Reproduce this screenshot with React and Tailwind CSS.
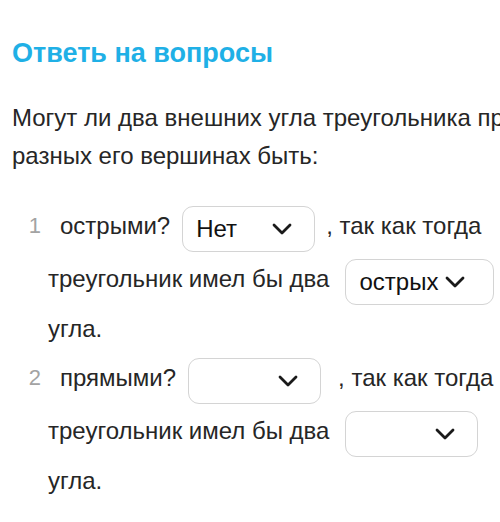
import React from "react";

const Chevron = () => (
    <svg width="20" height="12" viewBox="0 0 20 12" fill="none" className="shrink-0">
        <path d="M2 2 L10 10 L18 2" stroke="#1a1a1a" strokeWidth="2.8" strokeLinecap="round" strokeLinejoin="round" />
    </svg>
);

function Pick({ value, width, tight }) {
    return (
        <div
            className={`h-[46px] ${width} shrink-0 flex items-center ${tight ? "justify-start pr-[28px]" : "justify-between pr-[22px]"} pl-[13px] gap-[7px] border border-[#d4d4d4] rounded-[11px] bg-white text-[24px] text-[#111]`}
        >
            <span className="leading-none">{value}</span>
            <Chevron />
        </div>
    );
}

function Item({ num, word, answer, second, w1, w2, tight, gapA, gapB }) {
    return (
        <div className="flex flex-col">
            <div className="h-[53px] flex items-center">
                <span className="w-[29px] text-right text-[22px] text-[#a3a3a3] font-light mb-[6px]">{num}</span>
                <span className="ml-[19px] mb-[6px]">{word}</span>
                <div className={gapA}>
                    <Pick value={answer} width={w1} />
                </div>
                <span className={`${gapB} mb-[6px]`}>, так как тогда</span>
            </div>
            <div className="h-[53px] flex items-center pl-[36px]">
                <span className="mb-[6px]">треугольник имел бы два</span>
                <div className="ml-[16px]">
                    <Pick value={second} width={w2} tight={tight} />
                </div>
            </div>
            <div className="h-[46px] flex items-center pl-[36px]">
                <span className="mb-[4px]">угла.</span>
            </div>
        </div>
    );
}

export default function App() {
    return (
        <div
            className="w-[500px] h-[522px] overflow-hidden bg-white text-[#262626] text-[24px] whitespace-nowrap"
            style={{ fontFamily: '"Liberation Sans", Arial, sans-serif' }}
        >
            <h1 className="pt-[40px] pl-[12px] text-[27px] leading-none font-bold text-[#1fb0e6]">
                Ответь на вопросы
            </h1>
            <p className="mt-[32px] pl-[12px] leading-[38px]">
                Могут ли два внешних угла треугольника при
                <br />
                разных его вершинах быть:
            </p>
            <div className="mt-[27px] pl-[12px] flex flex-col">
                <Item
                    num="1"
                    word="острыми?"
                    answer="Нет"
                    second="острых"
                    w1="w-[133px]"
                    w2="w-auto"
                    tight
                    gapA="ml-[12px]"
                    gapB="ml-[11px]"
                />
                <Item
                    num="2"
                    word="прямыми?"
                    answer=""
                    second=""
                    w1="w-[133px]"
                    w2="w-[133px]"
                    gapA="ml-[12px]"
                    gapB="ml-[17px]"
                />
            </div>
        </div>
    );
}
